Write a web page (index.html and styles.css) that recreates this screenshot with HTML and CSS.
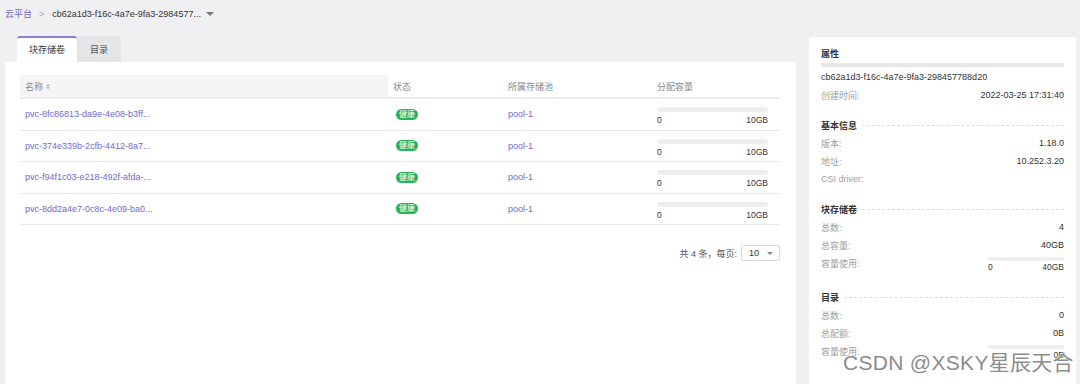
FILE: index.html
```html
<!DOCTYPE html>
<html lang="zh">
<head>
<meta charset="utf-8">
<link rel="stylesheet" href="styles.css">
</head>
<body>
<div class="crumb">
  <span class="crumb-link">云平台</span>
  <span class="crumb-sep">&gt;</span>
  <span class="crumb-cur">cb62a1d3-f16c-4a7e-9fa3-2984577...</span>
  <span class="caret"></span>
</div>
<div class="main">
  <div class="left">
    <div class="tabs">
      <div class="tab active">块存储卷</div>
      <div class="tab">目录</div>
    </div>
    <div class="card">
      <div class="table">
        <div class="tr th">
          <div class="c c1 sorted">名称 <span class="sort"><i class="up"></i><i class="down"></i></span></div>
          <div class="c c2">状态</div>
          <div class="c c3">所属存储池</div>
          <div class="c c4">分配容量</div>
        </div>
        <div class="tr">
          <div class="c c1 link">pvc-8fc86813-da9e-4e08-b3ff...</div>
          <div class="c c2"><span class="badge">健康</span></div>
          <div class="c c3 link">pool-1</div>
          <div class="c c4"><div class="cap"><div class="bar"></div><div class="cap-l"><span>0</span><span>10GB</span></div></div></div>
        </div>
        <div class="tr">
          <div class="c c1 link">pvc-374e339b-2cfb-4412-8a7...</div>
          <div class="c c2"><span class="badge">健康</span></div>
          <div class="c c3 link">pool-1</div>
          <div class="c c4"><div class="cap"><div class="bar"></div><div class="cap-l"><span>0</span><span>10GB</span></div></div></div>
        </div>
        <div class="tr">
          <div class="c c1 link">pvc-f94f1c03-e218-492f-afda-...</div>
          <div class="c c2"><span class="badge">健康</span></div>
          <div class="c c3 link">pool-1</div>
          <div class="c c4"><div class="cap"><div class="bar"></div><div class="cap-l"><span>0</span><span>10GB</span></div></div></div>
        </div>
        <div class="tr">
          <div class="c c1 link">pvc-8dd2a4e7-0c8c-4e09-ba0...</div>
          <div class="c c2"><span class="badge">健康</span></div>
          <div class="c c3 link">pool-1</div>
          <div class="c c4"><div class="cap"><div class="bar"></div><div class="cap-l"><span>0</span><span>10GB</span></div></div></div>
        </div>
      </div>
      <div class="pager">
        <span class="pager-text">共 4 条，每页:</span>
        <div class="select"><span>10</span><span class="caret small"></span></div>
      </div>
    </div>
  </div>
  <div class="side">
    <div class="sec-title first">属性</div>
    <div class="thick"></div>
    <div class="id">cb62a1d3-f16c-4a7e-9fa3-298457788d20</div>
    <div class="row"><span class="k">创建时间:</span><span class="v">2022-03-25 17:31:40</span></div>

    <div class="sec-title"><span>基本信息</span><span class="dots"></span></div>
    <div class="row"><span class="k">版本:</span><span class="v">1.18.0</span></div>
    <div class="row"><span class="k">地址:</span><span class="v">10.252.3.20</span></div>
    <div class="row"><span class="k">CSI driver:</span><span class="v"></span></div>

    <div class="sec-title"><span>块存储卷</span><span class="dots"></span></div>
    <div class="row"><span class="k">总数:</span><span class="v">4</span></div>
    <div class="row"><span class="k">总容量:</span><span class="v">40GB</span></div>
    <div class="row"><span class="k">容量使用:</span><div class="cap side-cap"><div class="bar"></div><div class="cap-l"><span>0</span><span>40GB</span></div></div></div>

    <div class="sec-title after-cap"><span>目录</span><span class="dots"></span></div>
    <div class="row"><span class="k">总数:</span><span class="v">0</span></div>
    <div class="row"><span class="k">总配额:</span><span class="v">0B</span></div>
    <div class="row"><span class="k">容量使用:</span><div class="cap side-cap"><div class="bar"></div><div class="cap-l"><span></span><span>0B</span></div></div></div>
  </div>
</div>
<div class="watermark">CSDN @XSKY星辰天合</div>
</body>
</html>
```
FILE: styles.css
```css
* { box-sizing: border-box; }
html, body { margin: 0; padding: 0; }
body {
  width: 1080px;
  height: 384px;
  overflow: hidden;
  background: #f0f0f2;
  font-family: "Liberation Sans", "Noto Sans CJK SC", sans-serif;
  font-size: 9px;
  color: #333;
  position: relative;
}
.crumb {
  height: 28px;
  display: flex;
  align-items: center;
  padding-left: 5px;
  padding-bottom: 1px;
}
.crumb-link { color: #7468cf; }
.crumb-sep { color: #aaa; margin: 0 8px 0 7px; }
.crumb-cur { color: #333; }
.caret {
  width: 0; height: 0;
  border-left: 4px solid transparent;
  border-right: 4px solid transparent;
  border-top: 4px solid #777;
  margin-left: 5px;
}
.caret.small { border-left-width: 3.5px; border-right-width: 3.5px; border-top-width: 3.5px; border-top-color: #888; margin-left: 0; }
.main {
  display: flex;
  gap: 13px;
  padding-left: 5px;
  margin-top: 8px;
}
.left { width: 791px; display: flex; flex-direction: column; }
.tabs { display: flex; padding-left: 12px; height: 26px; }
.tab {
  height: 26px;
  width: 44px;
  display: flex; align-items: center; justify-content: center;
  background: #e5e5e7;
  color: #555;
  border-radius: 3px 3px 0 0;
  white-space: nowrap;
}
.tab.active {
  width: 60px;
  background: #fff;
  color: #333;
  border-top: 2px solid #8a7fd8;
  padding-bottom: 1px;
}
.card {
  background: #fff;
  height: 322px;
  padding: 13px 16px 0 15px;
}
.table { width: 760px; }
.tr {
  display: flex;
  height: 31.5px;
  border-bottom: 1px solid #e9e9ec;
  align-items: stretch;
}
.tr.th { height: 24px; border-bottom: 2px solid #ececee; color: #8a8a8a; }
.c { display: flex; align-items: center; padding-left: 5px; }
.c1 { width: 368px; }
.c2 { width: 115px; padding-left: 8px; }
.c3 { width: 149px; }
.c4 { width: 128px; }
.th .c2 { padding-left: 5px; }
.sorted { background: #f5f5f7; }
.sort { display: inline-flex; flex-direction: column; gap: 1px; margin-left: 3px; }
.sort i { width: 0; height: 0; border-left: 2.5px solid transparent; border-right: 2.5px solid transparent; }
.sort .up { border-bottom: 2.5px solid #aaa; }
.sort .down { border-top: 2.5px solid #aaa; }
.link { color: #7468cf; }
.badge {
  display: inline-block;
  background: #26b15a;
  color: #fff;
  font-size: 8px;
  line-height: 11px;
  height: 11px;
  padding: 0 3px;
  border-radius: 6px;
}
.cap { width: 111px; display: flex; flex-direction: column; padding-top: 4px; }
.bar { height: 5px; background: #eeeeef; border-radius: 3px; }
.cap-l { display: flex; justify-content: space-between; font-size: 8.5px; margin-top: 3px; color: #333; }
.pager {
  display: flex;
  justify-content: flex-end;
  align-items: center;
  width: 760px;
  margin-top: 20px;
}
.pager-text { color: #555; margin-right: 4px; }
.select {
  width: 39px; height: 16px;
  border: 1px solid #d9d9d9;
  border-radius: 2px;
  display: flex; align-items: center; justify-content: space-between;
  padding: 0 6px 0 7px;
  color: #333;
}
.side {
  width: 267px;
  height: 348px;
  margin-top: 1px;
  background: #fff;
  padding: 7px 12px 0 12px;
  display: flex;
  flex-direction: column;
}
.sec-title {
  display: flex; align-items: center;
  font-weight: bold;
  color: #333;
  height: 18px;
  margin-top: 12px;
  flex-shrink: 0;
}
.sec-title.first { margin-top: 0; }
.sec-title.after-cap { margin-top: 16px; }
.dots { flex: 1; border-top: 1px dashed #ddd; margin-left: 5px; }
.thick { height: 4px; background: #e8e8e8; margin-top: 1px; flex-shrink: 0; }
.id { height: 18px; display: flex; align-items: center; margin-top: 1px; color: #333; flex-shrink: 0; }
.row { display: flex; justify-content: space-between; align-items: center; height: 18px; flex-shrink: 0; }
.row .k { color: #a0a0a0; }
.row .v { color: #333; }
.side-cap { width: 76px; padding-top: 3px; align-self: flex-start; height: 18px; }
.side-cap .cap-l { margin-top: 1px; }
.watermark {
  position: absolute;
  left: 843px;
  top: 346px;
  font-size: 21px;
  color: #8c8c8c;
  font-family: "Liberation Sans", "Noto Sans CJK SC", sans-serif;
  text-shadow: 0 0 2px #fff, 0 0 1px #fff;
  letter-spacing: 0.3px;
}
```
